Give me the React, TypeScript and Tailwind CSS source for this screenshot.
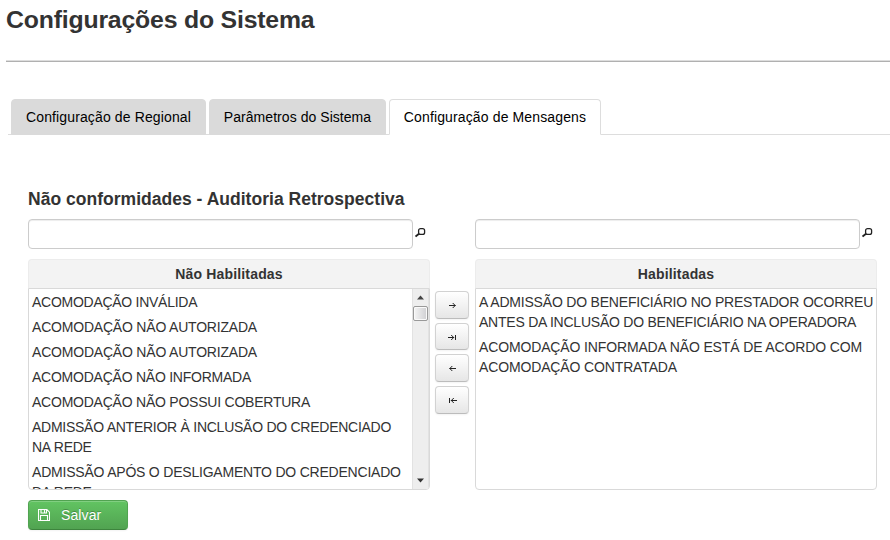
import type { ReactNode } from "react";

type Line = [text: string, tracking: string];

const available: Line[][] = [
  [["ACOMODAÇÃO INVÁLIDA", "tracking-[-0.27px]"]],
  [["ACOMODAÇÃO NÃO AUTORIZADA", "tracking-[-0.2px]"]],
  [["ACOMODAÇÃO NÃO AUTORIZADA", "tracking-[-0.2px]"]],
  [["ACOMODAÇÃO NÃO INFORMADA", "tracking-[-0.24px]"]],
  [["ACOMODAÇÃO NÃO POSSUI COBERTURA", "tracking-[-0.23px]"]],
  [["ADMISSÃO ANTERIOR À INCLUSÃO DO CREDENCIADO", "tracking-[-0.26px]"], ["NA REDE", "tracking-[-0.25px]"]],
  [["ADMISSÃO APÓS O DESLIGAMENTO DO CREDENCIADO", "tracking-[-0.21px]"], ["DA REDE", "tracking-[-0.25px]"]],
];
const enabled: Line[][] = [
  [
    ["A ADMISSÃO DO BENEFICIÁRIO NO PRESTADOR OCORREU", "tracking-[-0.2px]"],
    ["ANTES DA INCLUSÃO DO BENEFICIÁRIO NA OPERADORA", "tracking-[-0.24px]"],
  ],
  [
    ["ACOMODAÇÃO INFORMADA NÃO ESTÁ DE ACORDO COM", "tracking-[-0.14px]"],
    ["ACOMODAÇÃO CONTRATADA", "tracking-[-0.14px]"],
  ],
];

const arrows = [
  "M1 4.5H7.5M4.7 2L7.2 4.5L4.7 7",
  "M0 4.5H6M3.2 2L5.7 4.5L3.2 7M7.5 2V7",
  "M8 4.5H1.5M4.3 2L1.8 4.5L4.3 7",
  "M9 4.5H3M5.8 2L3.3 4.5L5.8 7M1.5 2V7",
];

function Tab({ children, width, active = false }: { children: ReactNode; width: string; active?: boolean }) {
  return (
    <button
      className={`${width} h-9 shrink-0 rounded-t-[4px] border pb-px text-[14px] leading-5 whitespace-nowrap text-black ${
        active ? "border-[#ddd] border-b-white bg-white" : "border-[#dadada] bg-[#dadada]"
      }`}
    >
      {children}
    </button>
  );
}

function Search() {
  return (
    <div className="flex h-[30px] items-center gap-[2px]">
      <input className="h-[30px] w-[385px] rounded-[4px] border border-[#ccc] bg-white shadow-[inset_0_1px_1px_rgba(0,0,0,0.075)] outline-none" />
      <svg width="11" height="11" viewBox="0 0 11 11" fill="none" stroke="#222" className="mb-1">
        <rect x="3.6" y="1.6" width="6" height="5.8" rx="2" strokeWidth="1.3" />
        <path d="M4 6.7L.5 9.5" strokeWidth="1.9" />
      </svg>
    </div>
  );
}

function Scrollbar() {
  return (
    <div className="flex w-[17px] shrink-0 flex-col items-center border-x border-[#e2e2e2] bg-[#eee]">
      <svg width="15" height="17" viewBox="0 0 15 17"><path d="M4 10.5L7.5 6.5L11 10.5Z" fill="#444" /></svg>
      <div className="h-[15px] w-[15px] rounded-[2px] border border-[#999] bg-linear-to-r from-[#f5f5f5] to-[#cfcfd2] shadow-[inset_0_0_0_1px_#fafafa]" />
      <svg width="15" height="17" viewBox="0 0 15 17" className="mt-auto"><path d="M4 6.5L7.5 10.5L11 6.5Z" fill="#333" /></svg>
    </div>
  );
}

function Panel({ title, items, scroll = false }: { title: string; items: Line[][]; scroll?: boolean }) {
  return (
    <section className="h-[231px] w-[402px]">
      <h3 className="flex h-[29px] items-center justify-center rounded-t-[4px] border border-b-0 border-[#ececec] bg-[#f3f3f3] text-[14px] leading-5 font-bold tracking-[0.17px]">
        {title}
      </h3>
      <div className="flex h-[202px] overflow-hidden rounded-b-[4px] border border-[#d9d9d9] bg-white">
        <ul className="min-w-0 grow overflow-hidden">
          {items.map((lines, i) => (
            <li key={i} className="pt-[3px] pb-[2px] pl-[3px] text-[14px] leading-5 whitespace-nowrap">
              {lines.map(([text, tracking]) => (
                <span key={text} className={`block ${tracking}`}>{text}</span>
              ))}
            </li>
          ))}
        </ul>
        {scroll && <Scrollbar />}
      </div>
    </section>
  );
}

export default function App() {
  return (
    <main className="h-[540px] w-[890px] overflow-hidden bg-white font-['Liberation_Sans',Arial,sans-serif] text-[#333]">
      <h1 className="ml-[6px] h-[60px] pt-[5px] text-[24.8px] leading-[30px] font-bold tracking-[-0.18px]">Configurações do Sistema</h1>
      <div className="ml-[6px] h-[2px] border-t border-b border-t-[#ddd] border-b-[#b0b0b0]" />
      <nav className="mt-[37px] ml-2 flex h-9 gap-[3px] pl-[3px] shadow-[inset_0_-1px_0_#ddd]">
        <Tab width="w-[195px]"><span className="tracking-[0.13px]">Configuração de Regional</span></Tab>
        <Tab width="w-[177px]"><span className="tracking-[0.05px]">Parâmetros do Sistema</span></Tab>
        <Tab width="w-[212px]" active><span className="tracking-[0.13px]">Configuração de Mensagens</span></Tab>
      </nav>
      <div className="pt-[54px] pl-7">
        <h2 className="h-[30px] text-[17.5px] leading-5 font-bold tracking-[0.02px]">Não conformidades - Auditoria Retrospectiva</h2>
        <div className="grid grid-cols-[407px_40px_402px] gap-y-[10px]">
          <Search />
          <span />
          <Search />
          <Panel title="Não Habilitadas" items={available} scroll />
          <div className="flex flex-col gap-1 pt-8">
            {arrows.map((d) => (
              <button
                key={d}
                className="flex h-[27.7px] w-[34px] items-center justify-center rounded-[4px] border border-[#d2d2d2] border-b-[#bcbcbc] bg-linear-to-b from-white to-[#e6e6e6] pt-px shadow-[0_1px_2px_rgba(0,0,0,0.05)]"
              >
                <svg width="9" height="9" viewBox="0 0 9 9" fill="none" stroke="#222" strokeWidth="1"><path d={d} /></svg>
              </button>
            ))}
          </div>
          <Panel title="Habilitadas" items={enabled} />
        </div>
        <button className="mt-[10px] flex h-[30px] w-[100px] items-center rounded-[4px] border border-[#51a351] border-b-[#3d853d] bg-linear-to-b from-[#62c462] to-[#51a351] pl-[9px] text-[14px] leading-5 tracking-[0.1px] text-white shadow-[inset_0_1px_0_rgba(255,255,255,0.2),0_1px_2px_rgba(0,0,0,0.05)] text-shadow-[0_-1px_0_rgba(0,0,0,0.25)]">
          <svg width="12" height="12" viewBox="0 0 12 12" fill="none" stroke="white" strokeWidth="1.1" className="mr-[11px]">
            <path d="M.5 .5H8.8L11.5 3.2V11.5H.5ZM3 .5V4H8.5V.5M6.5 1V3.4M2.5 11.5V6.5H9.5V11.5" />
          </svg>
          Salvar
        </button>
      </div>
    </main>
  );
}
